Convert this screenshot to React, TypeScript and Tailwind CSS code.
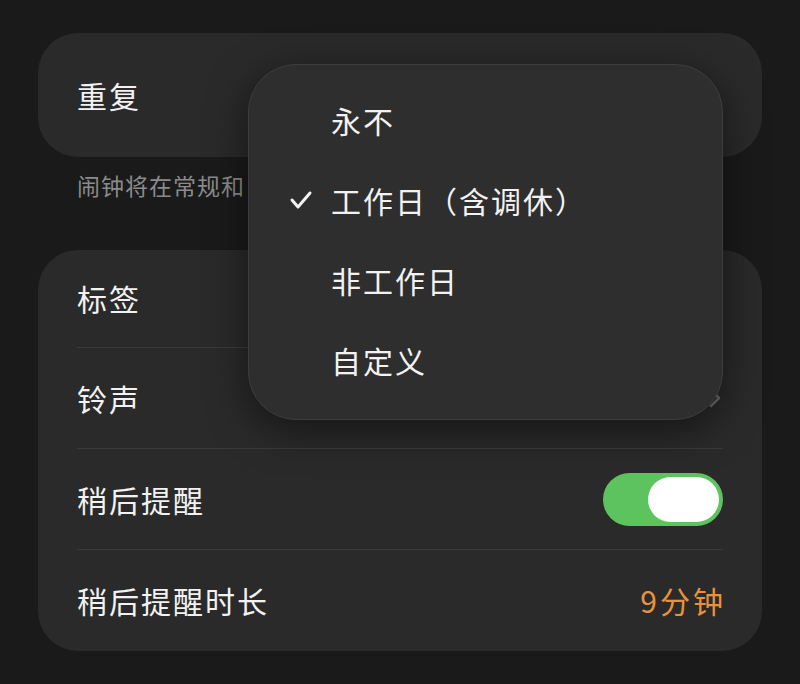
import { useState } from 'react';

const font = { fontFamily: '"Noto Sans CJK SC", "Noto Sans", sans-serif' };

const repeatOptions = ['永不', '工作日（含调休）', '非工作日', '自定义'];

function Row({
  label,
  children,
  divider = true,
  first = false,
}: {
  label: string;
  children?: React.ReactNode;
  divider?: boolean;
  first?: boolean;
}) {
  return (
    <div className={`flex flex-col ${first ? 'h-[98px]' : 'h-[101px]'}`}>
      <div className="flex-1 flex items-center justify-between">
        <span className="text-[30px] tracking-[2px] text-[#f2f2f2]">{label}</span>
        {children}
      </div>
      {divider && <div className="h-px bg-[#3a3a3a]" />}
    </div>
  );
}

export default function App() {
  const [snooze, setSnooze] = useState(true);
  const selected = 1;

  return (
    <div className="relative w-[800px] h-[684px] bg-[#1a1a1a] overflow-hidden" style={font}>
      <div className="flex flex-col px-[38px] pt-[33px]">
        {/* Repeat */}
        <div className="h-[124px] rounded-[40px] bg-[#2a2a2a] flex items-center px-[39px]">
          <span className="text-[30px] tracking-[2px] text-[#f2f2f2]">重复</span>
        </div>
        <div className="h-[93px] px-[39px] pt-[11px]">
          {/* the rest of the caption sits under the open menu */}
          <span className="text-[23px] tracking-[1px] text-[#8b8b8b] whitespace-nowrap">闹钟将在常规和</span>
        </div>

        {/* Settings card */}
        <div className="rounded-[40px] bg-[#2a2a2a] px-[39px]">
          <Row label="标签" first />
          <Row label="铃声">
            <svg width="12" height="20" viewBox="0 0 12 20" className="mr-[2px]">
              <polyline points="2,2 10,10 2,18" fill="none" stroke="#6b6b6b" strokeWidth="2.5" strokeLinecap="round" strokeLinejoin="round" />
            </svg>
          </Row>
          <Row label="稍后提醒">
            <button
              onClick={() => setSnooze(!snooze)}
              className={`w-[120px] h-[53px] rounded-full p-[4px] flex ${snooze ? 'bg-[#5cc35e] justify-end' : 'bg-[#48484a] justify-start'}`}
            >
              <span className="w-[71px] h-[45px] rounded-full bg-white block" />
            </button>
          </Row>
          <Row label="稍后提醒时长" divider={false}>
            <span className="text-[30px] tracking-[3px] -mr-[3px] text-[#e8923c]">9分钟</span>
          </Row>
        </div>
      </div>

      {/* Repeat dropdown */}
      <div className="absolute left-[248px] top-[64px] w-[475px] h-[356px] rounded-[48px] bg-[#2e2e2e] border border-[#3d3d3d] shadow-[0_10px_40px_rgba(0,0,0,0.5)] flex flex-col justify-center pb-[4px]">
        {repeatOptions.map((opt, i) => (
          <div key={opt} className="h-[80px] flex items-center">
            <div className="w-[82px] flex justify-end pr-[18px]">
              {i === selected && (
                <svg width="24" height="20" viewBox="0 0 24 20">
                  <polyline points="3,10 9,17 21,3" fill="none" stroke="#f2f2f2" strokeWidth="3" strokeLinecap="round" strokeLinejoin="round" />
                </svg>
              )}
            </div>
            <span className="text-[30px] tracking-[2px] text-[#f2f2f2]">{opt}</span>
          </div>
        ))}
      </div>
    </div>
  );
}
